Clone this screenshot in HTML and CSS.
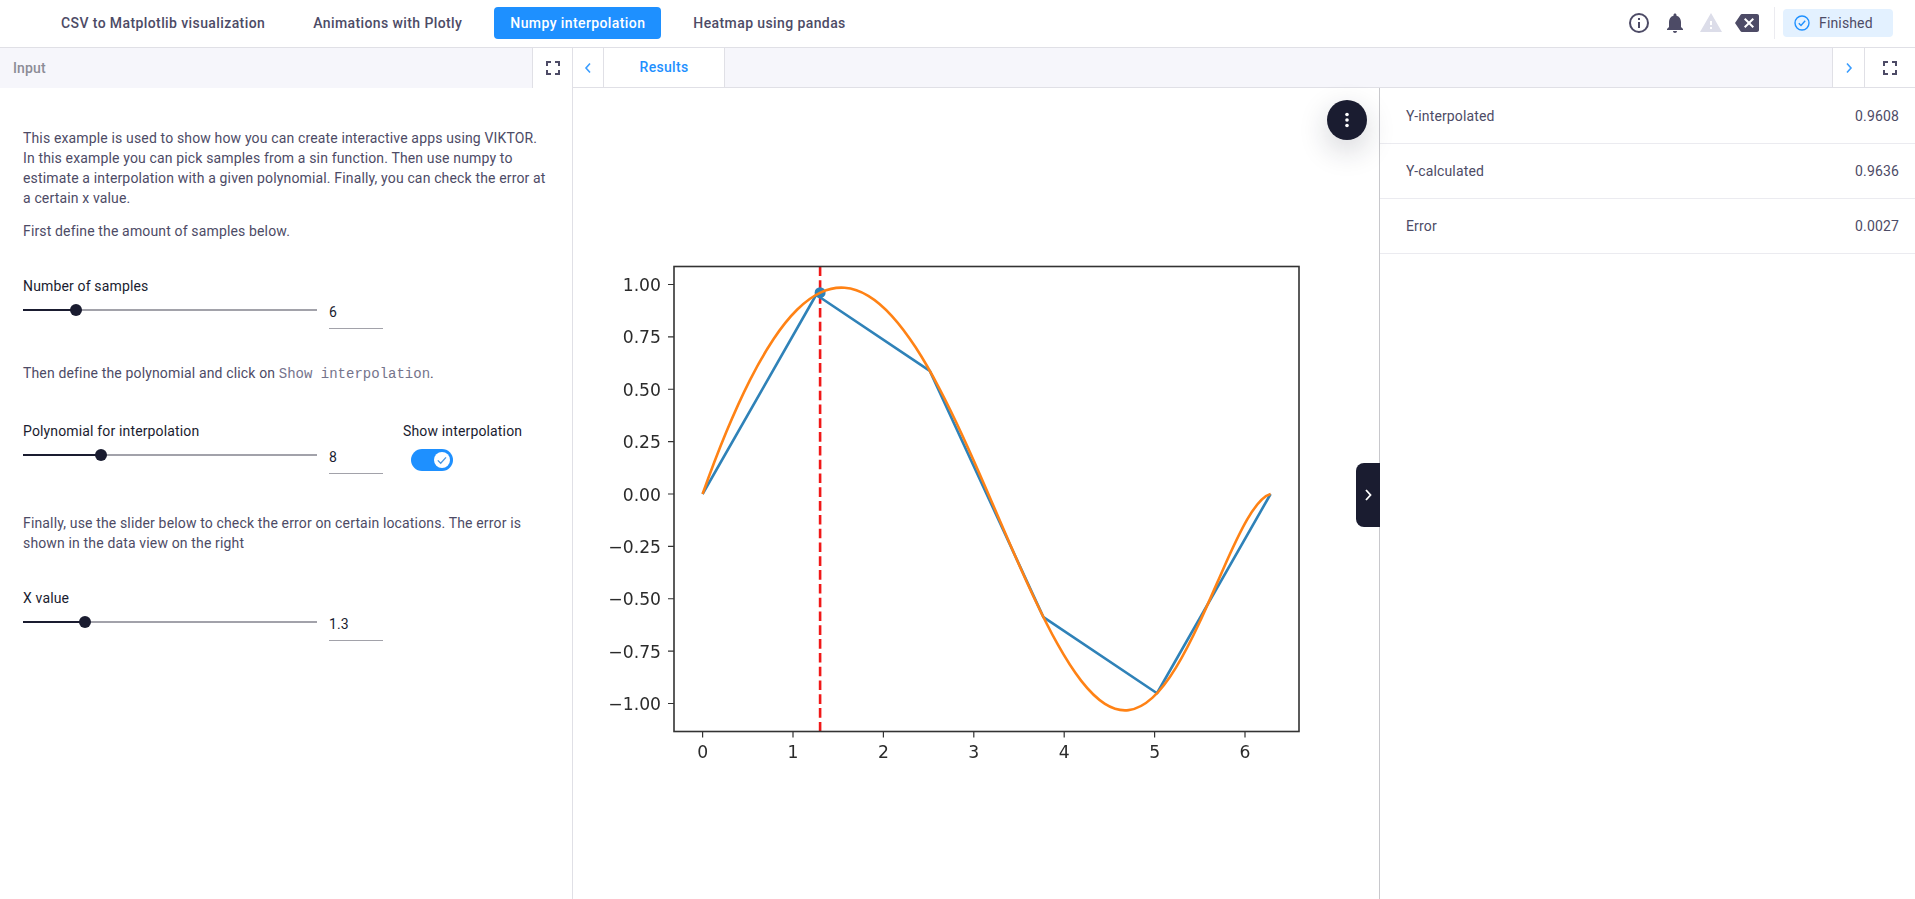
FILE: index.html
```html
<!DOCTYPE html>
<html lang="en">
  <head>
    <meta charset="UTF-8" />
    <title>Numpy interpolation</title>
    <link rel="stylesheet" href="styles.css">
  </head>
  <body>
    <header class="topbar">
      <nav class="app-tabs">
        <a class="app-tab">CSV to Matplotlib visualization</a>
        <a class="app-tab">Animations with Plotly</a>
        <a class="app-tab active">Numpy interpolation</a>
        <a class="app-tab">Heatmap using pandas</a>
      </nav>

      <div class="top-icons">
        <svg class="icon" viewBox="0 0 24 24"><circle cx="12" cy="12" r="9" fill="none" stroke="#4d4b66" stroke-width="2"/><path d="M11 11h2v6h-2zM11 7h2v2h-2z" fill="#4d4b66"/></svg>
        <svg class="icon" viewBox="0 0 24 24"><path d="M12 22c1.1 0 2-.9 2-2h-4c0 1.1.9 2 2 2zm6-6v-5c0-3.07-1.63-5.64-4.5-6.32V4c0-.83-.67-1.5-1.5-1.5s-1.5.67-1.5 1.5v.68C7.64 5.36 6 7.92 6 11v5l-2 2v1h16v-1l-2-2z" fill="#4d4b66"/></svg>
        <svg class="icon" viewBox="0 0 24 24"><path d="M1 21h22L12 2 1 21zm12-3h-2v-2h2v2zm0-4h-2v-4h2v4z" fill="#dcdde9"/></svg>
        <svg class="icon" viewBox="0 0 24 24"><path d="M22 3H7c-.69 0-1.23.35-1.59.88L0 12l5.41 8.11c.36.53.9.89 1.59.89h15c1.1 0 2-.9 2-2V5c0-1.1-.9-2-2-2zm-3 12.59L17.59 17 14 13.41 10.41 17 9 15.59 12.59 12 9 8.41 10.41 7 14 10.59 17.59 7 19 8.41 15.41 12 19 15.59z" fill="#4d4b66"/></svg>
      </div>

      <div class="status">
        <svg class="status-icon" viewBox="0 0 16 16"><circle cx="8" cy="8" r="7" fill="none" stroke="#1e90ff" stroke-width="1.4"/><path d="M4.8 8.2l2.2 2.2 4.2-4.6" fill="none" stroke="#1e90ff" stroke-width="1.4"/></svg>
        Finished
      </div>
    </header>

    <main class="workspace">
      <section class="input-panel">
        <div class="input-head">
          <span class="input-title">Input</span>
          <button class="expand-btn">
            <svg class="expand-icon" viewBox="0 0 14 14"><path d="M1 5V1h4M9 1h4v4M13 9v4H9M5 13H1V9" fill="none" stroke="#4d4b66" stroke-width="2"/></svg>
          </button>
        </div>

        <div class="form">
          <p class="text intro">This example is used to show how you can create interactive apps using VIKTOR. In this example you can pick samples from a sin function. Then use numpy to estimate a interpolation with a given polynomial. Finally, you can check the error at a certain x value.</p>
          <p class="text first-define">First define the amount of samples below.</p>

          <div class="field samples-field">
            <label class="field-label">Number of samples</label>
            <div class="slider-row">
              <div class="slider"><div class="slider-fill" style="width: 18%"></div></div>
              <div class="slider-value">6</div>
            </div>
          </div>

          <p class="text then-define">Then define the polynomial and click on <code>Show interpolation</code>.</p>

          <div class="field-row">
            <div class="field">
              <label class="field-label">Polynomial for interpolation</label>
              <div class="slider-row">
                <div class="slider"><div class="slider-fill" style="width: 26.4%"></div></div>
                <div class="slider-value">8</div>
              </div>
            </div>
            <div class="toggle-field">
              <label class="field-label">Show interpolation</label>
              <div class="toggle">
                <svg class="toggle-knob" viewBox="0 0 18 18"><circle cx="9" cy="9" r="8" fill="#fff"/><path d="M4.800 9.400l2.900 2.800 5.300-5.800" fill="none" stroke="#4a96e0" stroke-width="1.300"/></svg>
              </div>
            </div>
          </div>

          <p class="text finally">Finally, use the slider below to check the error on certain locations. The error is shown in the data view on the right</p>

          <div class="field x-field">
            <label class="field-label">X value</label>
            <div class="slider-row">
              <div class="slider"><div class="slider-fill" style="width: 21%"></div></div>
              <div class="slider-value">1.3</div>
            </div>
          </div>
        </div>
      </section>

      <section class="output-panel">
        <div class="result-head">
          <button class="arrow-btn">
            <svg class="arrow" viewBox="0 0 10 14"><path d="M7 2.500L3 7l4 4.500" fill="none" stroke="#3a9dff" stroke-width="1.600"/></svg>
          </button>
          <a class="result-tab">Results</a>
          <div class="head-spacer"></div>
          <button class="arrow-btn right">
            <svg class="arrow" viewBox="0 0 10 14"><path d="M3 2.500L7 7l-4 4.500" fill="none" stroke="#3a9dff" stroke-width="1.600"/></svg>
          </button>
          <button class="expand-btn wide">
            <svg class="expand-icon" viewBox="0 0 14 14"><path d="M1 5V1h4M9 1h4v4M13 9v4H9M5 13H1V9" fill="none" stroke="#4d4b66" stroke-width="2"/></svg>
          </button>
        </div>

        <div class="result-body">
          <div class="plot-view">
            <svg class="plot" viewBox="573 191.500 806 604">
              <path class="ticks" d="M668 284h6M668 336.400h6M668 388.750h6M668 441.100h6M668 493.500h6M668 545.900h6M668 598.250h6M668 650.600h6M668 703h6"/>
              <path class="ticks" d="M702.600 731v6M793 731v6M883.400 731v6M973.800 731v6M1064.200 731v6M1154.600 731v6M1245 731v6"/>

              <g class="y-labels">
                <text x="661" y="290.500">1.00</text>
                <text x="661" y="342.900">0.75</text>
                <text x="661" y="395.250">0.50</text>
                <text x="661" y="447.600">0.25</text>
                <text x="661" y="500">0.00</text>
                <text x="661" y="552.400">−0.25</text>
                <text x="661" y="604.750">−0.50</text>
                <text x="661" y="657.100">−0.75</text>
                <text x="661" y="709.500">−1.00</text>
              </g>
              <g class="x-labels">
                <text x="702.600" y="757">0</text>
                <text x="793" y="757">1</text>
                <text x="883.400" y="757">2</text>
                <text x="973.800" y="757">3</text>
                <text x="1064.200" y="757">4</text>
                <text x="1154.600" y="757">5</text>
                <text x="1245" y="757">6</text>
              </g>

              <path class="line-red" d="M820.100 266V731"/>
              <path class="line-blue" d="M702.600 493.500L816.200 294.250 929.800 370.360 1043.400 616.640 1157 692.750 1270.600 493.500"/>
              <circle cx="820.100" cy="292.200" r="5.500" fill="#2f82b8"/>
              <path class="line-orange" d="M702.600 493.500C710.490 471.340 718.380 450.650 726.270 431.610C734.160 412.570 742.040 395.180 749.930 379.600C757.820 364.020 765.710 350.260 773.600 338.450C781.490 326.640 789.380 316.790 797.270 308.990C805.160 301.190 813.040 295.460 820.930 291.840C828.820 288.220 836.710 286.690 844.600 287.290C852.490 287.890 860.380 290.610 868.270 295.350C876.160 300.090 884.050 306.880 891.940 315.530C899.830 324.180 907.710 334.690 915.600 346.830C923.490 358.970 931.380 372.750 939.270 387.770C947.160 402.790 955.050 419.070 962.940 436.180C970.830 453.290 978.710 471.240 986.600 489.440C994.490 507.640 1002.380 526.120 1010.270 544.260C1018.160 562.400 1026.050 580.210 1033.940 597.010C1041.830 613.810 1049.710 629.610 1057.600 643.730C1065.490 657.850 1073.380 670.290 1081.270 680.420C1089.160 690.550 1097.050 698.380 1104.940 703.380C1112.830 708.380 1120.710 710.570 1128.600 709.620C1136.490 708.670 1144.380 704.580 1152.270 697.410C1160.160 690.240 1168.050 679.950 1175.940 667.070C1183.830 654.190 1191.710 638.720 1199.600 621.760C1207.490 604.800 1215.380 586.360 1223.270 568.460C1231.160 550.560 1239.050 533.190 1246.940 519.440C1254.830 505.690 1262.710 495.540 1270.600 493.500"/>

              <rect class="axes" x="674" y="266" width="625" height="465"/>
            </svg>

            <button class="menu-btn">
              <svg class="menu-dots" viewBox="0 0 4 16"><circle cx="2" cy="2.500" r="1.800"/><circle cx="2" cy="8" r="1.800"/><circle cx="2" cy="13.500" r="1.800"/></svg>
            </button>
            <button class="collapse-btn">
              <svg class="collapse-icon" viewBox="0 0 10 14"><path d="M3 2l4.500 5L3 12" fill="none" stroke="#fff" stroke-width="1.800"/></svg>
            </button>
          </div>

          <aside class="data-panel">
            <div class="data-row"><span>Y-interpolated</span><span>0.9608</span></div>
            <div class="data-row"><span>Y-calculated</span><span>0.9636</span></div>
            <div class="data-row"><span>Error</span><span>0.0027</span></div>
          </aside>
        </div>
      </section>
    </main>
  </body>
</html>
```

FILE: styles.css
```css
* {
  margin: 0;
  padding: 0;
  box-sizing: border-box;
}

html,
body {
  height: 100%;
}

body {
  font-family: Roboto, "Liberation Sans", sans-serif;
  font-size: 14px;
  letter-spacing: 0.15px;
  color: #4d4b66;
  background-color: #fff;
  overflow: hidden;
  display: flex;
  flex-direction: column;
}

button {
  border: none;
  background-color: transparent;
  cursor: pointer;
}

.topbar {
  height: 48px;
  flex-shrink: 0;
  display: flex;
  align-items: center;
  padding: 0 22px 1px 45px;
  border-bottom: 1px solid #e0e0e6;
}

.app-tabs {
  display: flex;
  gap: 16px;
}

.app-tab {
  padding: 0 16px;
  height: 32px;
  line-height: 32px;
  font-weight: 500;
  letter-spacing: 0.4px;
  border-radius: 4px;
}

.app-tab.active {
  background-color: #1e90ff;
  color: #fff;
}

.top-icons {
  margin-left: auto;
  display: flex;
  gap: 12px;
  padding-right: 15px;
  border-right: 1px solid #ebebf0;
  height: 32px;
  align-items: center;
}

.icon {
  width: 24px;
  height: 24px;
}

.status {
  margin-left: 8px;
  width: 110px;
  height: 28px;
  display: flex;
  align-items: center;
  gap: 9px;
  padding-left: 11px;
  border-radius: 4px;
  background-color: #e3f1ff;
}

.status-icon {
  width: 16px;
  height: 16px;
}

.workspace {
  flex: 1;
  display: flex;
  min-height: 0;
}

.input-panel {
  width: 573px;
  flex-shrink: 0;
  border-right: 1px solid #e0e0e6;
}

.input-head {
  height: 40px;
  display: flex;
  align-items: center;
  justify-content: space-between;
  padding-left: 13px;
  background-color: #f6f6fb;
}

.input-title {
  font-weight: 500;
  color: #8c8c96;
}

.expand-btn {
  width: 40px;
  height: 40px;
  display: grid;
  place-content: center;
  background-color: #fff;
  border-left: 1px solid #e0e0e6;
}

.expand-btn.wide {
  width: 51px;
  height: 39px;
}

.expand-icon {
  width: 14px;
  height: 14px;
  display: block;
}

.form {
  padding: 40px 0 0 23px;
}

.text {
  line-height: 20px;
  width: 525px;
}

code {
  font-family: "Liberation Mono", monospace;
  font-size: 14px;
  line-height: 1;
  letter-spacing: 0;
  color: #75748c;
}

.first-define {
  margin-top: 13px;
}

.samples-field {
  margin-top: 35px;
}

.then-define {
  margin-top: 34px;
}

.field-row {
  margin-top: 38px;
  display: flex;
}

.finally {
  margin-top: 39px;
}

.x-field {
  margin-top: 35px;
}

.field-label {
  display: block;
  line-height: 20px;
  color: #1a1c30;
}

.slider-row {
  display: flex;
  height: 33px;
}

.slider {
  width: 294px;
  height: 2px;
  margin-top: 13px;
  background-color: #a2a2aa;
}

.slider-fill {
  position: relative;
  height: 100%;
  background-color: #1a1c30;
}

.slider-fill::after {
  content: "";
  position: absolute;
  right: -6px;
  top: -5px;
  width: 12px;
  height: 12px;
  border-radius: 50%;
  background-color: #1a1c30;
}

.slider-value {
  width: 54px;
  margin-left: 12px;
  padding-top: 6px;
  line-height: 20px;
  color: #1a1c30;
  border-bottom: 1px solid #a2a2aa;
}

.toggle-field {
  margin-left: 20px;
}

.toggle {
  margin: 8px 0 0 8px;
  width: 42px;
  height: 22px;
  border-radius: 11px;
  background-color: #1e90ff;
  display: flex;
  justify-content: flex-end;
  align-items: center;
  padding-right: 2px;
}

.toggle-knob {
  width: 18px;
  height: 18px;
}

.output-panel {
  flex: 1;
  min-width: 0;
  display: flex;
  flex-direction: column;
}

.result-head {
  height: 40px;
  flex-shrink: 0;
  display: flex;
  background-color: #f6f6fb;
  border-bottom: 1px solid #e0e0e6;
}

.arrow-btn {
  width: 31px;
  height: 39px;
  display: grid;
  place-content: center;
  background-color: #fff;
  border-right: 1px solid #e0e0e6;
}

.arrow-btn.right {
  width: 32px;
  border-left: 1px solid #e0e0e6;
  border-right: none;
}

.arrow {
  width: 10px;
  height: 14px;
  display: block;
}

.result-tab {
  width: 121px;
  height: 39px;
  line-height: 39px;
  text-align: center;
  font-weight: 500;
  letter-spacing: 0.3px;
  color: #1e90ff;
  background-color: #fff;
  border-right: 1px solid #e0e0e6;
}

.head-spacer {
  flex: 1;
}

.result-body {
  flex: 1;
  display: flex;
  min-height: 0;
}

.plot-view {
  width: 807px;
  flex-shrink: 0;
  position: relative;
  display: flex;
  align-items: center;
  border-right: 1px solid #c8c8cc;
}

.plot {
  width: 806px;
  height: 604px;
  display: block;
  filter: blur(0.35px);
}

.ticks {
  fill: none;
  stroke: #333;
  stroke-width: 1.2;
}

.axes {
  fill: none;
  stroke: #333;
  stroke-width: 1.6;
}

.y-labels text,
.x-labels text {
  font-family: "DejaVu Sans", sans-serif;
  font-size: 17.2px;
  letter-spacing: 0;
  fill: #2b2b2b;
}

.y-labels text {
  text-anchor: end;
}

.x-labels text {
  text-anchor: middle;
}

.line-red {
  fill: none;
  stroke: #f01818;
  stroke-width: 2.6;
  stroke-dasharray: 9.6 4.2;
}

.line-blue {
  fill: none;
  stroke: #2f82b8;
  stroke-width: 2.6;
  stroke-linejoin: round;
}

.line-orange {
  fill: none;
  stroke: #ff8215;
  stroke-width: 2.6;
}

.menu-btn {
  position: absolute;
  top: 12px;
  right: 12px;
  width: 40px;
  height: 40px;
  border-radius: 50%;
  background-color: #1a1c30;
  box-shadow: 0 10px 30px rgba(26, 28, 48, 0.2);
  display: grid;
  place-content: center;
}

.menu-dots {
  width: 4px;
  height: 16px;
  display: block;
  fill: #fff;
}

.collapse-btn {
  position: absolute;
  right: -1px;
  top: 375px;
  width: 24px;
  height: 64px;
  border-radius: 8px 0 0 8px;
  background-color: #1a1c30;
  display: grid;
  place-content: center;
}

.collapse-icon {
  width: 10px;
  height: 14px;
  display: block;
}

.data-panel {
  flex: 1;
  padding-top: 1px;
}

.data-row {
  height: 55px;
  display: flex;
  justify-content: space-between;
  align-items: center;
  padding-inline: 26px 16px;
  border-bottom: 1px solid #ebebf0;
}
```
